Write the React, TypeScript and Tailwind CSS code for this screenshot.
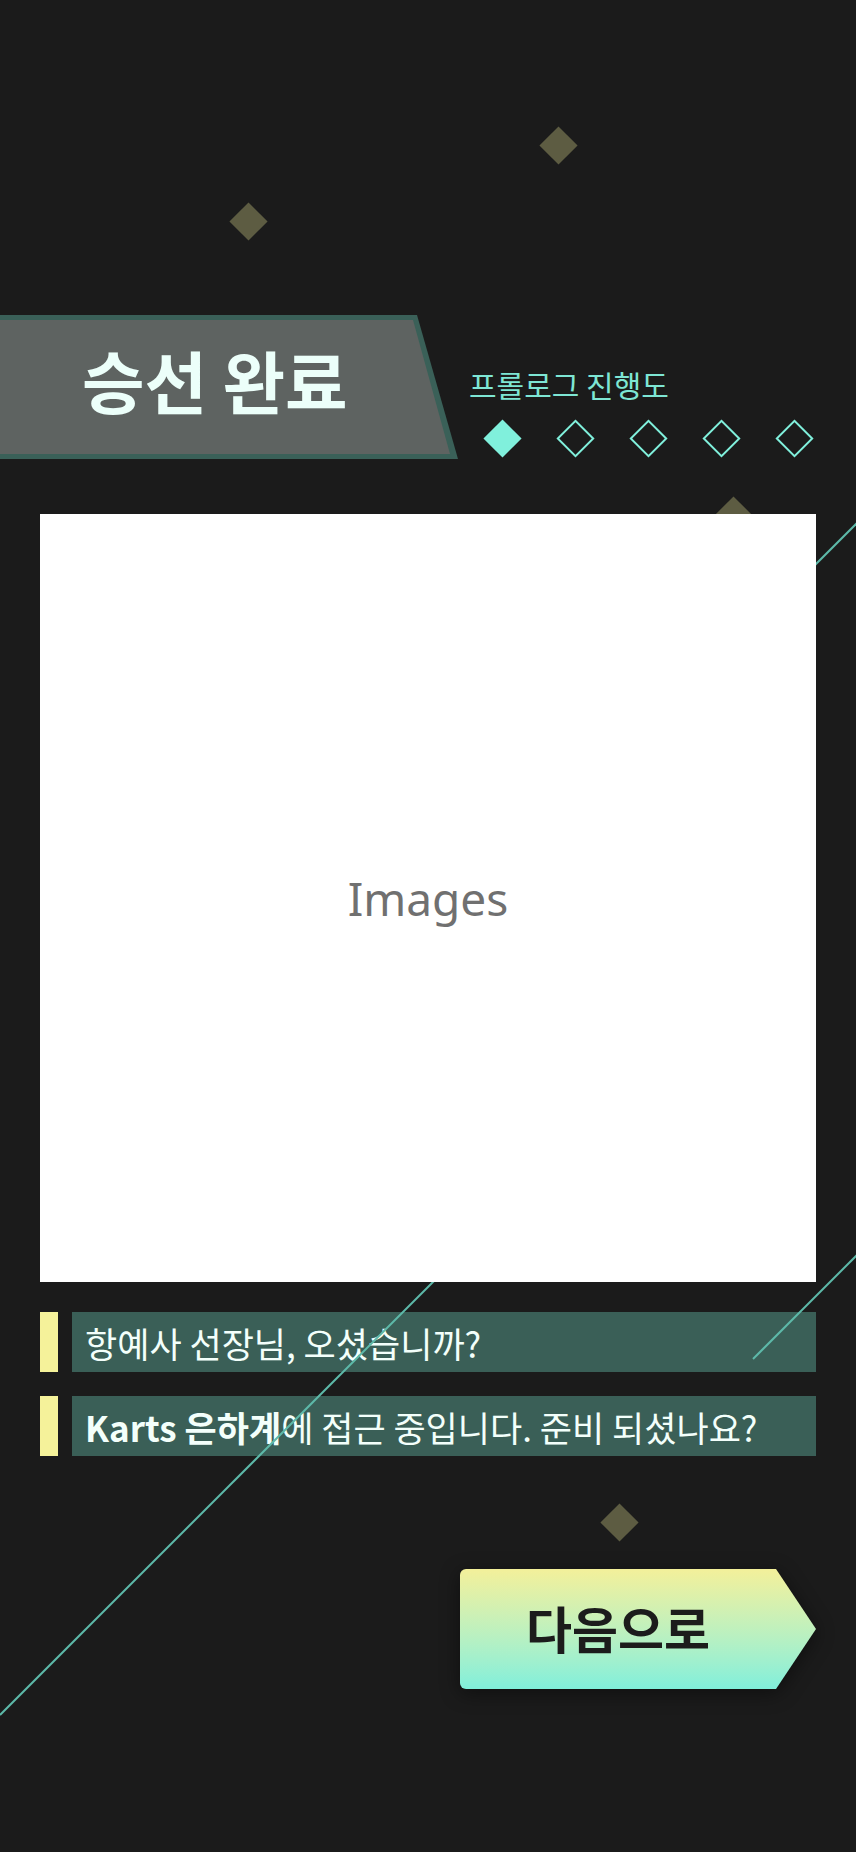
import React from 'react';

const Deco = ({ className }: { className: string }) => (
    <div className={`absolute h-[27px] w-[27px] rotate-45 bg-[#5d5c42] ${className}`} />
);

const Step = ({ done }: { done?: boolean }) => (
    <div className="flex h-[38px] w-[38px] items-center justify-center">
        <div
            className={
                done
                    ? 'h-[27px] w-[27px] rotate-45 bg-[#80f0dc]'
                    : 'h-[27px] w-[27px] rotate-45 border-2 border-[#80f0dc]'
            }
        />
    </div>
);

const Line = ({ className }: { className: string }) => (
    <div className={`absolute z-10 h-[2px] origin-left -rotate-45 bg-[#5db9a9] ${className}`} />
);

const DialogRow = ({ children }: { children: React.ReactNode }) => (
    <div className="flex h-[60px] gap-[14px]">
        <div className="w-[18px] bg-[#f5f29a]" />
        <div className="flex flex-1 items-center bg-[#3a5f57] pl-[13px] text-[35px] leading-none text-[#f3fffb]">
            {children}
        </div>
    </div>
);

export default function App() {
    return (
        <div className="relative h-[1852px] w-[856px] overflow-hidden bg-[#1b1b1b] font-['Noto_Sans_CJK_KR','Noto_Sans',sans-serif]">
            {/* floating decoration */}
            <Deco className="left-[545px] top-[132px]" />
            <Deco className="left-[235px] top-[208px]" />
            <Deco className="left-[720px] top-[502px]" />
            <Deco className="left-[606px] top-[1509px]" />

            <Line className="left-0 top-[1714px] w-[707px]" />
            <Line className="left-[600px] top-[779px] w-[430px]" />
            <Line className="left-[753px] top-[1358px] w-[210px]" />

            <div className="flex flex-col pt-[315px]">
                {/* header */}
                <div className="flex items-start">
                    <div className="h-[144px] w-[458px] bg-[#3a6058] pt-[5px] [clip-path:polygon(0_0,417px_0,100%_100%,0_100%)]">
                        <div className="h-[134px] w-[450px] bg-[#5e6361] pl-[82px] pt-[26px] [clip-path:polygon(0_0,413px_0,100%_100%,0_100%)]">
                            <span className="text-[68px] font-bold leading-none text-[#ecfffa]">승선 완료</span>
                        </div>
                    </div>
                    <div className="ml-[11px] flex flex-col pt-[54px]">
                        <span className="text-[30px] leading-[30px] text-[#7ee6d4]">프롤로그 진행도</span>
                        <div className="ml-[14px] mt-[20px] flex gap-[35px]">
                            <Step done />
                            <Step />
                            <Step />
                            <Step />
                            <Step />
                        </div>
                    </div>
                </div>

                {/* image placeholder */}
                <div className="relative z-20 mx-[40px] mt-[55px] flex h-[768px] items-center justify-center bg-white">
                    <span className="font-['Noto_Sans',sans-serif] text-[46px] text-[#707070]">Images</span>
                </div>

                {/* dialog */}
                <div className="mx-[40px] mt-[30px] flex flex-col gap-[24px]">
                    <DialogRow>항예사 선장님, 오셨습니까?</DialogRow>
                    <DialogRow>
                        <span className="font-semibold">Karts 은하계</span>에 접근 중입니다. 준비 되셨나요?
                    </DialogRow>
                </div>

                {/* next */}
                <div className="mr-[40px] mt-[113px] flex justify-end drop-shadow-[0_4px_10px_rgba(0,0,0,0.45)]">
                    <button className="flex h-[120px] w-[356px] rounded-l-[6px] bg-linear-to-b from-[#f3f09a] to-[#80efdb] [clip-path:polygon(0_0,316px_0,100%_50%,316px_100%,0_100%)]">
                        <span className="flex h-full w-[316px] items-center justify-center pb-[5px] text-[50px] font-bold leading-none text-[#1c1c1c]">
                            다음으로
                        </span>
                    </button>
                </div>
            </div>
        </div>
    );
}
